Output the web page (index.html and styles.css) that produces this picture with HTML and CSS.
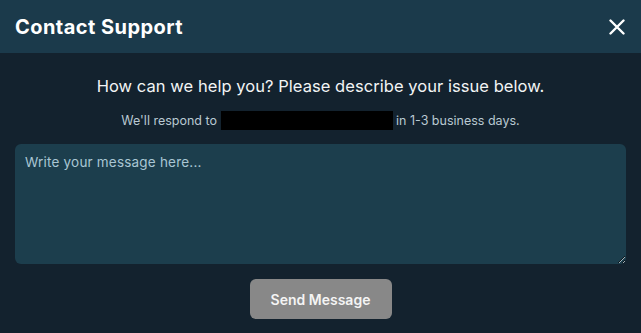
FILE: index.html
```html
<!DOCTYPE html>
<html>
<head>
<meta charset="utf-8">
<link rel="stylesheet" href="styles.css">
</head>
<body>
<div class="modal">
  <div class="header">
    <h1 class="title">Contact Support</h1>
    <button class="close" aria-label="Close">
      <svg width="16" height="16" viewBox="0 0 16 16"><path d="M1.5 1.5L14.5 14.5M14.5 1.5L1.5 14.5" stroke="#fff" stroke-width="2.4" stroke-linecap="round"/></svg>
    </button>
  </div>
  <div class="content">
    <p class="lead">How can we help you? Please describe your issue below.</p>
    <p class="sub">We'll respond to <span class="redact"></span> in 1-3 business days.</p>
    <textarea class="message" placeholder="Write your message here..."></textarea>
    <div class="actions"><button class="send">Send Message</button></div>
  </div>
</div>
</body>
</html>
```
FILE: styles.css
```css
html, body { margin: 0; padding: 0; }
body {
  background: #13222e;
  font-family: Inter, "Noto Sans", sans-serif;
  width: 641px;
  height: 333px;
  overflow: hidden;
}
.header {
  height: 53px;
  background: #1b3a4b;
  display: flex;
  align-items: center;
  justify-content: space-between;
  padding: 0 16px 0 15px;
}
.title {
  margin: 0;
  color: #fff;
  font-size: 20px;
  font-weight: 700;
  letter-spacing: 0.45px;
}
.close {
  background: none;
  border: 0;
  padding: 0;
  width: 16px;
  height: 16px;
  display: flex;
}
.content {
  padding: 21px 15px 0 15px;
  text-align: center;
}
.lead {
  margin: 0;
  color: #f2f4f5;
  font-size: 16.5px;
  line-height: 24px;
  letter-spacing: 0.05px;
}
.sub {
  margin: 13px 0 0 0;
  color: #b9c9d2;
  font-size: 12.5px;
  line-height: 20px;
}
.redact {
  display: inline-block;
  width: 172px;
  height: 19px;
  background: #000;
  vertical-align: -5px;
}
.message {
  display: block;
  margin-top: 13px;
  width: 100%;
  height: 120px;
  box-sizing: border-box;
  background: #1c3e4d;
  border: 0;
  border-radius: 6px;
  padding: 10px;
  font-family: inherit;
  font-size: 13.5px;
  letter-spacing: 0.2px;
  color: #dfe9ee;
  resize: vertical;
  outline: none;
}
.message::placeholder { color: #a9c6d4; }
.actions {
  margin-top: 15px;
  display: flex;
  justify-content: center;
}
.send {
  width: 142px;
  height: 40px;
  background: #888888;
  border: 0;
  border-radius: 6px;
  color: #f4f4f4;
  font-family: inherit;
  font-size: 14px;
  font-weight: 600;
}
```
